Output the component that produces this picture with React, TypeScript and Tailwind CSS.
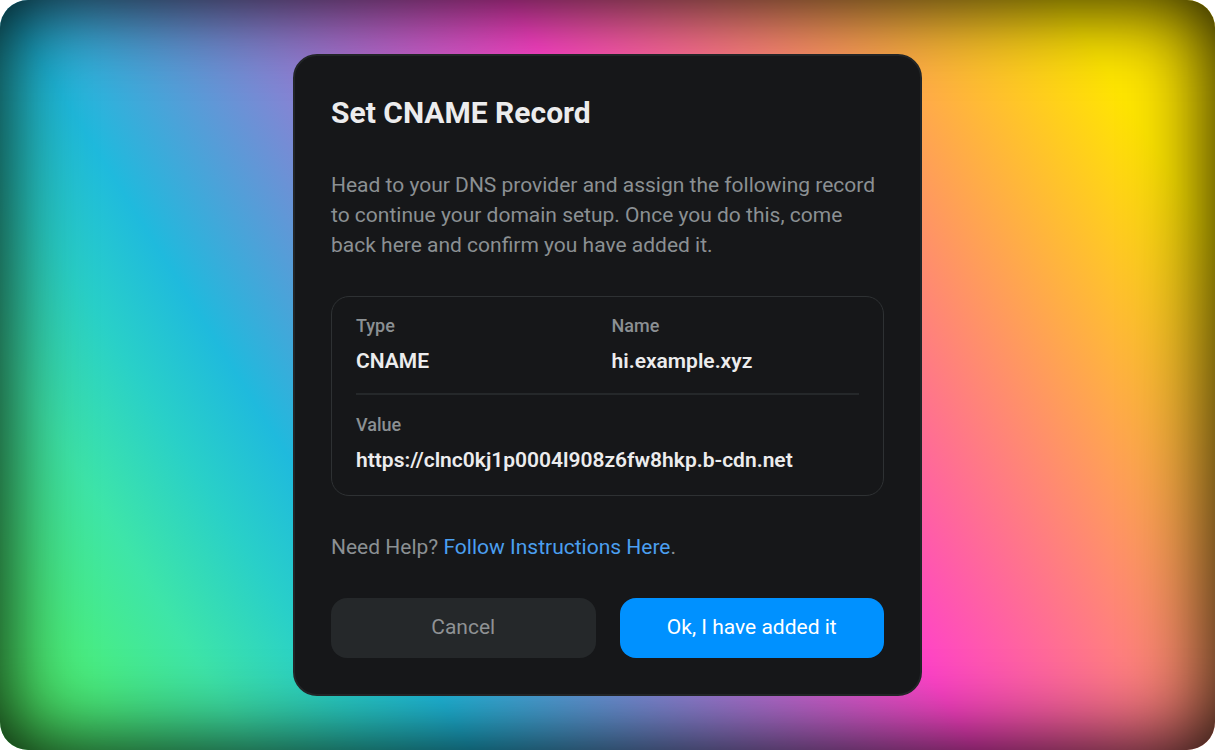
type FieldProps = { label: string; value: string };

function Field({ label, value }: FieldProps) {
  return (
    <div className="flex min-w-0 flex-col gap-2">
      <dt className="text-[18px] leading-6 font-medium text-[#8b9093]">{label}</dt>
      <dd className="text-[21px] leading-[30px] font-semibold break-words text-[#ececed]">{value}</dd>
    </div>
  );
}

export default function App() {
  return (
    <main className="flex min-h-screen items-center justify-center rounded-[28px] bg-[linear-gradient(58deg,#52f25e_1%,#4aee80_8%,#3ee5a8_15%,#29d0c8_22%,#1fbadd_28%,#ff43c8_58%,#ffe600_91%)] p-6 font-['Roboto',sans-serif] shadow-[inset_0_0_84px_#000]">
      <section
        role="dialog"
        aria-labelledby="dialog-title"
        className="flex w-full max-w-[629px] flex-col gap-9 rounded-3xl border-2 border-[#222527] bg-[#161719] p-9"
      >
        <h1 id="dialog-title" className="text-[30px] leading-[42px] font-bold text-[#ececed]">
          Set CNAME Record
        </h1>

        <p className="text-[21px] leading-[30px] text-[#8b9093]">
          Head to your DNS provider and assign the following record to continue your domain setup. Once you do
          this, come back here and confirm you have added it.
        </p>

        <dl className="rounded-[18px] border border-[#2e3133] px-6">
          <div className="grid grid-cols-2 gap-2 border-b-2 border-[#25282a] py-[17px]">
            <Field label="Type" value="CNAME" />
            <Field label="Name" value="hi.example.xyz" />
          </div>
          <div className="pt-[18px] pb-5">
            <Field label="Value" value="https://clnc0kj1p0004l908z6fw8hkp.b-cdn.net" />
          </div>
        </dl>

        <p className="text-[21px] leading-[30px] text-[#8b9093]">
          Need Help?{" "}
          <a href="#instructions" className="text-[#4b9ff0]">
            Follow Instructions Here
          </a>
          .
        </p>

        <div className="grid grid-cols-2 gap-6">
          <button type="button" className="h-[60px] rounded-2xl bg-[#25282a] text-[21px] text-[#8f9294]">
            Cancel
          </button>
          <button type="button" className="h-[60px] rounded-2xl bg-[#0091ff] text-[21px] text-white">
            Ok, I have added it
          </button>
        </div>
      </section>
    </main>
  );
}
